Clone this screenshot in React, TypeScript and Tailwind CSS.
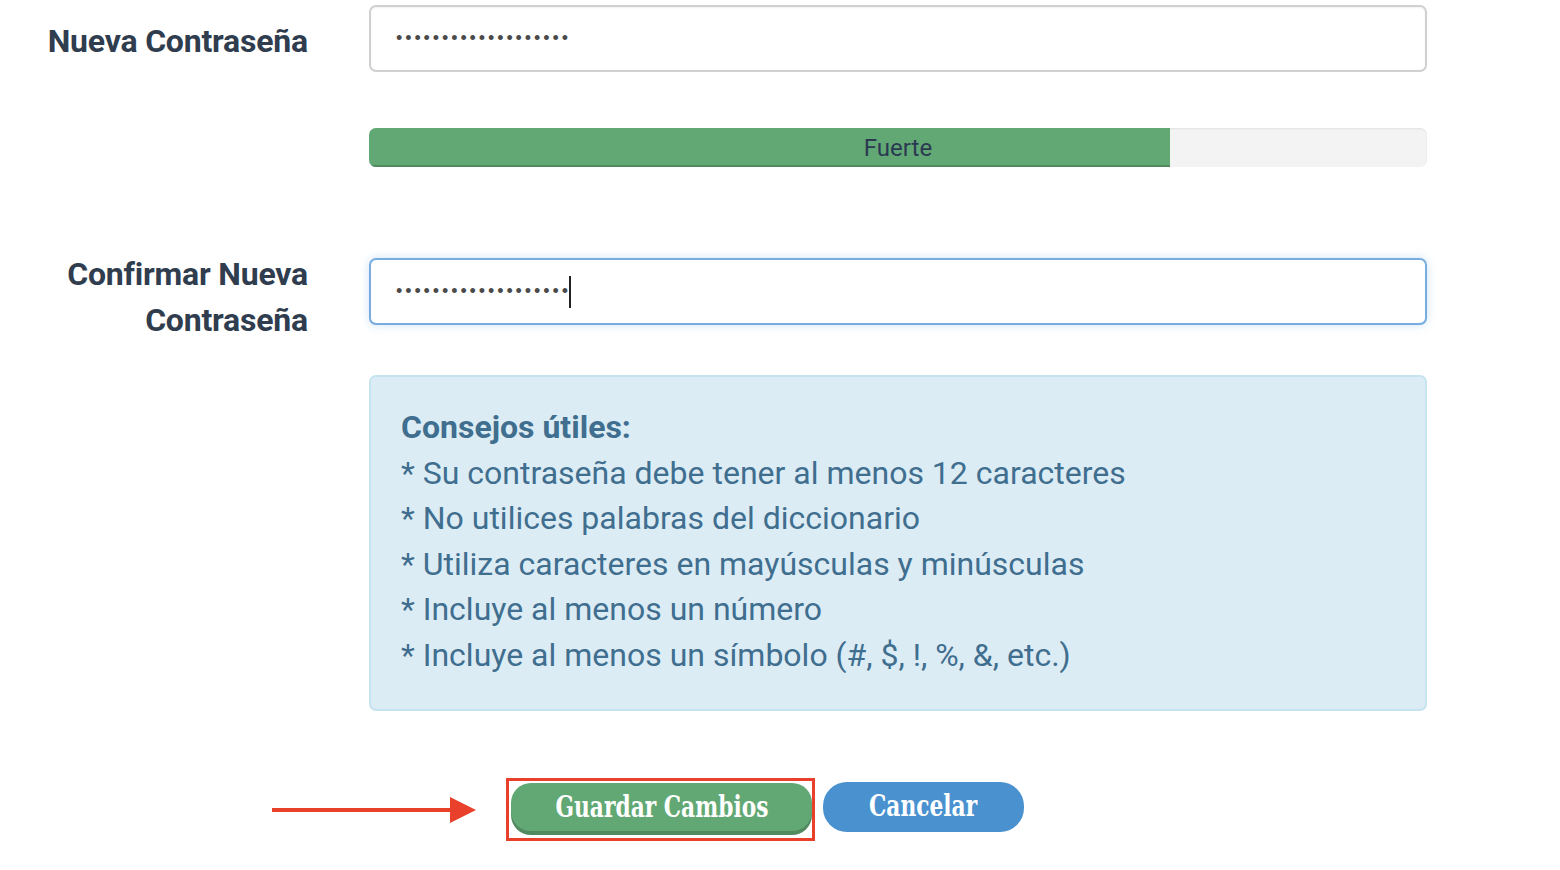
import React from 'react';

const dots = '•'.repeat(19);

const tips = [
  'Su contraseña debe tener al menos 12 caracteres',
  'No utilices palabras del diccionario',
  'Utiliza caracteres en mayúsculas y minúsculas',
  'Incluye al menos un número',
  'Incluye al menos un símbolo (#, $, !, %, &, etc.)',
];

function FakePassword({ focused }: { focused?: boolean }) {
  return (
    <div
      className={
        'h-[67px] w-[1058px] rounded-[7px] border-2 bg-white pl-[25px] flex items-center ' +
        (focused
          ? 'border-[#76acdf] shadow-[0_0_10px_rgba(118,172,223,0.35)]'
          : 'border-[#d0d0d0] shadow-[inset_0_1px_2px_rgba(0,0,0,0.06)]')
      }
    >
      <span className="font-['Liberation_Sans',sans-serif] text-[18px] tracking-[2.9px] text-[#4a4a4a] leading-none -mt-[2px]">
        {dots}
      </span>
      {focused && <span className="ml-[-2px] h-[32px] w-[2px] bg-[#222]" />}
    </div>
  );
}

export default function App() {
  return (
    <div className="min-h-[870px] w-[1560px] bg-white font-['Roboto',sans-serif] text-[#2f3d4f]">
      <div className="grid grid-cols-[308px_1058px] gap-x-[61px] pt-[5px]">
        <div className="text-right text-[32px] font-bold leading-[46px] pt-[13px] tracking-[-0.2px]">
          Nueva Contraseña
        </div>
        <FakePassword />

        <div />
        <div className="mt-[56px] h-[39px] rounded-[7px] bg-[#f3f3f3] shadow-[inset_0_1px_2px_rgba(0,0,0,0.08)] relative overflow-hidden">
          <div className="h-full w-[801px] bg-[#62a874] shadow-[inset_0_-2px_0_#4f8a60]" />
          <div className="absolute inset-0 flex items-center justify-center text-[24px] text-[#2b3a52]">
            Fuerte
          </div>
        </div>

        <div className="mt-[84px] text-right text-[32px] font-bold leading-[46px] tracking-[-0.2px]">
          Confirmar Nueva
          <br />
          Contraseña
        </div>
        <div className="mt-[91px]">
          <FakePassword focused />
        </div>

        <div />
        <div className="mt-[32px] rounded-[7px] border-2 border-[#c6e4ef] bg-[#dcecf5] px-[30px] pt-[28px] pb-[31px] text-[32px] leading-[45.5px] text-[#3f6e8f]">
          <div className="font-bold">Consejos útiles:</div>
          {tips.map((t) => (
            <div key={t}>* {t}</div>
          ))}
        </div>
      </div>

      <div className="mt-[67px] ml-[272px] flex items-center">
        <svg width="204" height="28" viewBox="0 0 204 28" className="shrink-0">
          <rect x="0" y="12" width="180" height="4" fill="#e8402a" />
          <polygon points="178,1 204,14 178,27" fill="#e8402a" />
        </svg>
        <div className="ml-[30px] border-[3px] border-[#e8402a] pl-[2px] pt-[2px] pb-[3px] pr-0">
          <button className="h-[48px] w-[301px] rounded-[20px] bg-[#62a874] shadow-[0_4px_0_#528a60] text-white font-['DejaVu_Serif',serif] font-bold text-[29px] leading-none mb-[4px] flex items-center justify-center">
            <span className="inline-block scale-x-[0.75] whitespace-nowrap">Guardar Cambios</span>
          </button>
        </div>
        <button className="ml-[8px] mb-[6px] h-[50px] w-[201px] rounded-[24px] bg-[#4a92cf] text-white font-['DejaVu_Serif',serif] font-bold text-[29px] leading-none flex items-center justify-center">
          <span className="inline-block scale-x-[0.75] whitespace-nowrap">Cancelar</span>
        </button>
      </div>
    </div>
  );
}
